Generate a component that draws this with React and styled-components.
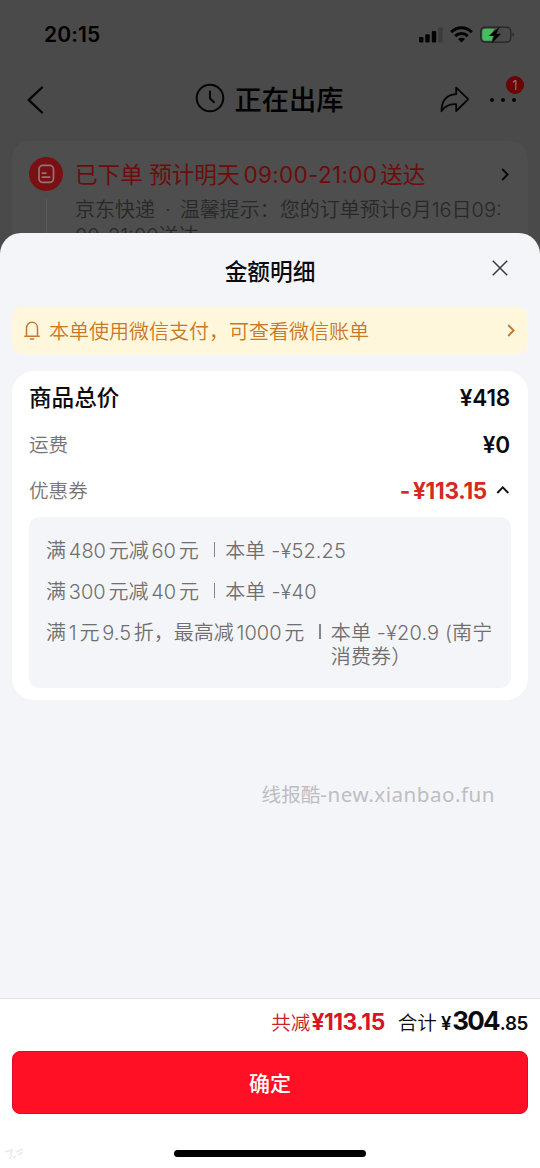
import React from "react";
import styled, { createGlobalStyle } from "styled-components";

const Global = createGlobalStyle`
  * { box-sizing: border-box; }
  body { margin: 0; background: #fff; }
`;

const Screen = styled.div`
  position: relative;
  width: 540px;
  height: 1168px;
  overflow: hidden;
  background: #4a4a4a;
  font-family: Inter, "Noto Sans CJK SC", sans-serif;
  color: #000;
`;

const T = styled.span`
  display: inline-block;
  white-space: pre;
  font-size: ${(p) => p.$size || 20}px;
  font-weight: ${(p) => p.$weight || 350};
  color: ${(p) => p.$color || "inherit"};
  letter-spacing: ${(p) => p.$ls || 0}px;
  line-height: ${(p) => p.$lh || 26}px;
  margin-left: ${(p) => p.$ml || 0}px;
`;

const StatusBar = styled.header`
  display: flex;
  align-items: center;
  justify-content: space-between;
  height: 68px;
  padding: 1px 25px 0 44px;
`;

const StatusIcons = styled.div`
  display: flex;
  align-items: center;
  gap: 7px;
`;

const NavBar = styled.nav`
  display: grid;
  grid-template-columns: 1fr auto 1fr;
  align-items: center;
  height: 63px;
  padding: 0 24px 0 27px;
`;

const NavTitle = styled.div`
  display: flex;
  align-items: center;
  gap: 10px;
  margin: 2px 5px 0 0;
  svg { margin-top: -5px; }
`;

const NavActions = styled.div`
  display: flex;
  align-items: center;
  justify-content: flex-end;
  gap: 20px;
`;

const More = styled.div`
  position: relative;
  display: flex;
  gap: 7px;
  width: 26px;
`;

const Dot = styled.i`
  width: 4px;
  height: 4px;
  border-radius: 50%;
  background: #060606;
`;

const Badge = styled.b`
  position: absolute;
  top: -22px;
  left: 16px;
  width: 18px;
  height: 18px;
  border-radius: 50%;
  background: #6b0206;
  color: #8b7373;
  font-size: 13px;
  font-weight: 400;
  line-height: 18px;
  text-align: center;
`;

const OrderCard = styled.section`
  display: flex;
  height: 120px;
  margin: 10px 12px 0;
  padding: 16px 19px 16px 17px;
  border-radius: 18px;
  background: #4e4e4e;
`;

const Timeline = styled.div`
  display: flex;
  flex-direction: column;
  align-items: center;
  width: 34px;
  gap: 8px;
`;

const TimelineLine = styled.div`
  width: 1px;
  flex: 1;
  background: #5a5a5a;
`;

const OrderInfo = styled.div`
  flex: 1;
  min-width: 0;
  padding: 4px 0 0 12px;
  color: #282828;
`;

const OrderHead = styled.div`
  display: flex;
  align-items: center;
  justify-content: space-between;
  height: 28px;
  margin-bottom: 8px;
  svg { margin-top: -2px; }
`;

const Sheet = styled.main`
  position: absolute;
  inset: 233px 0 0;
  display: flex;
  flex-direction: column;
  border-radius: 21px 21px 0 0;
  background: #f4f5f9;
  overflow: hidden;
`;

const SheetHeader = styled.div`
  display: grid;
  grid-template-columns: 1fr auto 1fr;
  align-items: center;
  height: 74px;
  padding: 3px 32px 0;
  svg { justify-self: end; margin-top: -7px; }
`;

const Notice = styled.div`
  display: flex;
  align-items: center;
  height: 47px;
  margin: 0 12px;
  padding: 2px 13px 0 12px;
  border-radius: 10px;
  background: #fff7dc;
  color: #c97826;
  svg { margin-top: -2px; }
  svg:last-child { margin-left: auto; }
`;

const PriceCard = styled.section`
  height: 329px;
  margin: 17px 12px 0;
  padding: 3px 17px 12px;
  border-radius: 22px;
  background: #fff;
`;

const PriceRow = styled.div`
  display: flex;
  align-items: center;
  justify-content: space-between;
  height: 46.7px;
  padding-top: 1px;
`;

const Amount = styled.div`
  display: flex;
  align-items: center;
  padding-right: 1px;
  svg { margin-top: -3px; }
`;

const CouponBox = styled.div`
  display: flex;
  flex-direction: column;
  gap: 17.3px;
  height: 171px;
  margin-top: 3px;
  padding: 21.5px 17px;
  border-radius: 10px;
  background: #f4f5f9;
  color: #6f6f6f;
`;

const Coupon = styled.div`
  display: flex;
  align-items: flex-start;
`;

const Divider = styled.i`
  width: 1.4px;
  height: 15px;
  margin: 3px 10px 0 15px;
  background: #858585;
`;

const Watermark = styled.div`
  margin: 81px 45px 0 auto;
  font-family: "Noto Sans", "Noto Sans CJK SC", sans-serif;
`;

const Footer = styled.footer`
  height: 170px;
  margin-top: auto;
  padding: 0 12px;
  border-top: 1px solid #e2e3e7;
  background: #fff;
`;

const Totals = styled.div`
  display: flex;
  align-items: baseline;
  justify-content: flex-end;
  height: 52px;
  padding-top: 9px;
`;

const Confirm = styled.button`
  display: block;
  width: 100%;
  height: 63px;
  border: 1px solid #d80e26;
  border-radius: 8px;
  background: #ff1024;
  color: #fff;
  font-family: inherit;
  padding: 2px 0 0;
`;

const HomeBar = styled.div`
  width: 192px;
  height: 7px;
  margin: 36px auto 0;
  border-radius: 4px;
  background: #000;
`;

const CornerMark = styled.svg`
  position: absolute;
  left: 4px;
  bottom: 8px;
`;

const Chevron = ({ color, w = 8, h = 13, sw = 1.9 }) => (
  <svg width={w} height={h} viewBox="0 0 8 13" fill="none" stroke={color} strokeWidth={sw}>
    <path d="M1.2 1L6.6 6.5 1.2 12" />
  </svg>
);

const Signal = () => (
  <svg width="24" height="16" viewBox="0 0 24 16" fill="#030303">
    <rect x="0" y="10" width="4.4" height="5.5" rx="1" />
    <rect x="6.3" y="7.3" width="4.4" height="8.2" rx="1" />
    <rect x="12.8" y="4" width="4.4" height="11.5" rx="1" />
    <rect x="19.2" y="0.5" width="4.4" height="15" rx="1" fill="#3b3b3b" />
  </svg>
);

const Wifi = () => (
  <svg width="23" height="17" viewBox="0 0 23 17" fill="none" stroke="#030303" strokeWidth="3">
    <path d="M1.2 6.1C7 .4 16 .4 21.8 6.1" />
    <path d="M5.2 10.1C8.8 6.7 14.2 6.7 17.8 10.1" />
    <path d="M8 13.1C10 11.2 13 11.2 15 13.1L11.5 16.6Z" fill="#030303" stroke="none" />
  </svg>
);

const Battery = () => (
  <svg width="35" height="18" viewBox="0 0 35 18">
    <rect x="0.8" y="1.2" width="30" height="15" rx="4.2" fill="none" stroke="#232323" strokeWidth="1.2" />
    <path d="M5 2.8H14.6L10 9.5H13.2L11.6 14.8H5A2.7 2.7 0 0 1 2.3 12.1V5.5A2.7 2.7 0 0 1 5 2.8Z" fill="#43bf60" />
    <path d="M19.8 0.8L8.6 10H14L11.8 17.2L21 7.8H16.2Z" fill="#020202" />
    <path d="M32.6 6.6C34.4 7.2 34.4 10.2 32.6 10.8Z" fill="#262626" />
  </svg>
);

/* Latin digits sit slightly apart from the neighbouring characters */
const CouponRow = ({ parts, children }) => (
  <Coupon>
    {parts.map((part, i) => (
      <T key={i} $lh={24} $ml={i ? 2.8 : 0}>{part}</T>
    ))}
    <Divider />
    <T $lh={24} $ls={0.15}>{children}</T>
  </Coupon>
);

export default function App() {
  return (
    <Screen>
      <Global />
      <StatusBar>
        <T $size={21} $weight={600} $ls={0.1}>20:15</T>
        <StatusIcons>
          <Signal />
          <Wifi />
          <Battery />
        </StatusIcons>
      </StatusBar>

      <NavBar>
        <svg width="17" height="28" viewBox="0 0 17 28" fill="none" stroke="#050505" strokeWidth="2.4" strokeLinecap="round">
          <path d="M15 1.5L1.8 14 15 26.5" />
        </svg>
        <NavTitle>
          <svg width="30" height="30" viewBox="0 0 30 30" fill="none" stroke="#050505" strokeWidth="2" strokeLinecap="round">
            <circle cx="15" cy="15" r="13.3" />
            <path d="M15 8.5V15.5L19 19.3" />
          </svg>
          <T $size={27.2} $weight={500} $lh={36}>正在出库</T>
        </NavTitle>
        <NavActions>
          <svg width="30" height="27" viewBox="0 0 30 27" fill="none" stroke="#050505" strokeWidth="1.8" strokeLinejoin="round">
            <path d="M16.2 1.6L28.2 13.2 16.2 25V18.2C9.5 17.7 4.8 20 1.5 25.3 1.5 15 6.2 8.7 16.2 8.1Z" />
          </svg>
          <More>
            <Dot /><Dot /><Dot />
            <Badge>1</Badge>
          </More>
        </NavActions>
      </NavBar>

      <OrderCard>
        <Timeline>
          <svg width="34" height="34" viewBox="0 0 34 34">
            <circle cx="17" cy="17" r="17" fill="#7a1013" />
            <g fill="none" stroke="#8f7575" strokeWidth="1.7" strokeLinecap="round">
              <rect x="10" y="8.4" width="14.5" height="17" rx="3.8" />
              <path d="M13.4 16.2H16.8M13.4 20.2H20.6" />
            </g>
          </svg>
          <TimelineLine />
        </Timeline>
        <OrderInfo>
          <OrderHead>
            <span>
              <T $size={22.6} $weight={400} $color="#6e0c0c">已下单 预计明天</T>
              <T $size={22.6} $weight={400} $ls={0.25} $color="#6e0c0c" $ml={4}>09:00-21:00</T>
              <T $size={22.6} $weight={400} $color="#6e0c0c" $ml={3}>送达</T>
            </span>
            <Chevron color="#080808" />
          </OrderHead>
          <T>京东快递</T>
          <T $ml={10}>·</T>
          <T $ml={9}>温馨提示：您的订单预计6月16日09:</T>
          <T>00-21:00送达</T>
        </OrderInfo>
      </OrderCard>

      <Sheet>
        <SheetHeader>
          <span />
          <T $size={22.7} $weight={500} $lh={30} $color="#0b0b10">金额明细</T>
          <svg width="16" height="16" viewBox="0 0 16 16" stroke="#3b3b3e" strokeWidth="1.5">
            <path d="M.8.8L15.2 15.2M15.2.8L.8 15.2" />
          </svg>
        </SheetHeader>

        <Notice>
          <svg width="16" height="19" viewBox="0 0 16 19" fill="none" stroke="#c47a33" strokeWidth="1.5" strokeLinecap="round">
            <path d="M.8 15.3H15.2M2.5 15V7.4C2.5 3.7 4.8 1.2 8 1.2S13.5 3.7 13.5 7.4V15M6.3 18.1H9.7" />
          </svg>
          <T $ml={9}>本单使用微信支付，可查看微信账单</T>
          <Chevron color="#c47a33" />
        </Notice>

        <PriceCard>
          <PriceRow>
            <T $size={22.6} $weight={500} $color="#0b0b10">商品总价</T>
            <Amount><T $size={22.6} $weight={600} $ls={-0.2} $color="#0b0b10">¥418</T></Amount>
          </PriceRow>
          <PriceRow>
            <T $size={19.6} $color="#747474">运费</T>
            <Amount><T $size={22.6} $weight={600} $ls={-0.2} $color="#0b0b10">¥0</T></Amount>
          </PriceRow>
          <PriceRow>
            <T $size={19.6} $color="#747474">优惠券</T>
            <Amount>
              <T $size={22.6} $weight={700} $ls={-0.4} $color="#d42a22">-</T>
              <T $size={22.6} $weight={700} $ls={-0.3} $color="#d42a22" $ml={3}>¥113.15</T>
              <svg width="23" height="12" viewBox="0 0 23 12" fill="none" stroke="#111" strokeWidth="1.9">
                <path d="M10.3 9L15.8 3.4 21.3 9" />
              </svg>
            </Amount>
          </PriceRow>

          <CouponBox>
            <CouponRow parts={["满", "480", "元减", "60", "元"]}>本单 -¥52.25</CouponRow>
            <CouponRow parts={["满", "300", "元减", "40", "元"]}>本单 -¥40</CouponRow>
            <CouponRow parts={["满", "1", "元", "9.5", "折，最高减", "1000", "元"]}>
              {"本单 -¥20.9 (南宁\n消费券）"}
            </CouponRow>
          </CouponBox>
        </PriceCard>

        <Watermark>
          <T $size={19.6} $weight={400} $color="#bdbec2">线报酷</T>
          <T $size={20.6} $weight={400} $ls={0.5} $color="#bdbec2">-new.xianbao.fun</T>
        </Watermark>

        <Footer>
          <Totals>
            <T $size={19.6} $color="#c9202c">共减</T>
            <T $size={22.8} $weight={700} $ls={-0.5} $color="#d81527" $ml={1}>¥113.15</T>
            <T $size={19.6} $ml={13} $color="#0b0b10">合计</T>
            <T $size={18.5} $weight={600} $ml={4} $color="#0b0b10">¥</T>
            <T $size={26} $weight={700} $ls={-1.8} $ml={1} $color="#0b0b10">304</T>
            <T $size={18.8} $weight={600} $ls={-0.4} $ml={1} $color="#0b0b10">.85</T>
          </Totals>
          <Confirm><T $size={21} $weight={500}>确定</T></Confirm>
          <HomeBar />
        </Footer>
        <CornerMark width="22" height="12" viewBox="0 0 22 12" fill="none" stroke="#ebebeb" strokeWidth="1.6">
          <path d="M1 4L8 2 6 11M9 10L12 8M12 4L19 1M14 7L19 4" />
        </CornerMark>
      </Sheet>
    </Screen>
  );
}
